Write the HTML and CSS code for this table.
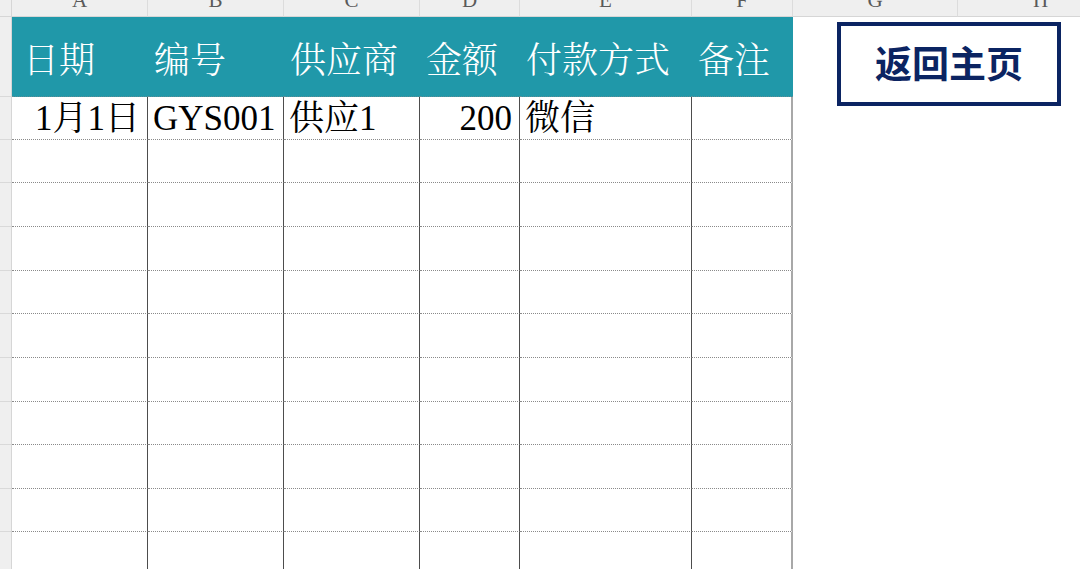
FILE: index.html
```html
<!DOCTYPE html>
<html lang="zh-CN">
<head>
<meta charset="utf-8">
<title>付款记录</title>
<link rel="stylesheet" href="styles.css">
</head>
<body>
<div class="sheet">
  <div class="row colhead">
    <div class="corner"></div>
    <div class="ch"><span>A</span></div>
    <div class="ch"><span>B</span></div>
    <div class="ch"><span>C</span></div>
    <div class="ch"><span>D</span></div>
    <div class="ch"><span>E</span></div>
    <div class="ch"><span>F</span></div>
    <div class="ch"><span>G</span></div>
    <div class="ch"><span>H</span></div>
  </div>

  <div class="row head">
    <div class="rh"></div>
    <div class="hc first">日期</div>
    <div class="hc">编号</div>
    <div class="hc">供应商</div>
    <div class="hc">金额</div>
    <div class="hc">付款方式</div>
    <div class="hc">备注</div>
    <div class="blank"></div>
    <div class="blank"></div>
  </div>

  <div class="row r43">
    <div class="rh"></div>
    <div class="c right">1月1日</div>
    <div class="c">GYS001</div>
    <div class="c">供应1</div>
    <div class="c right">200</div>
    <div class="c">微信</div>
    <div class="c last"></div>
    <div class="blank"></div>
    <div class="blank"></div>
  </div>

  <div class="row r43"><div class="rh"></div><div class="c"></div><div class="c"></div><div class="c"></div><div class="c"></div><div class="c"></div><div class="c last"></div><div class="blank"></div><div class="blank"></div></div>
  <div class="row r44"><div class="rh"></div><div class="c"></div><div class="c"></div><div class="c"></div><div class="c"></div><div class="c"></div><div class="c last"></div><div class="blank"></div><div class="blank"></div></div>
  <div class="row r44"><div class="rh"></div><div class="c"></div><div class="c"></div><div class="c"></div><div class="c"></div><div class="c"></div><div class="c last"></div><div class="blank"></div><div class="blank"></div></div>
  <div class="row r43"><div class="rh"></div><div class="c"></div><div class="c"></div><div class="c"></div><div class="c"></div><div class="c"></div><div class="c last"></div><div class="blank"></div><div class="blank"></div></div>
  <div class="row r44"><div class="rh"></div><div class="c"></div><div class="c"></div><div class="c"></div><div class="c"></div><div class="c"></div><div class="c last"></div><div class="blank"></div><div class="blank"></div></div>
  <div class="row r44"><div class="rh"></div><div class="c"></div><div class="c"></div><div class="c"></div><div class="c"></div><div class="c"></div><div class="c last"></div><div class="blank"></div><div class="blank"></div></div>
  <div class="row r43"><div class="rh"></div><div class="c"></div><div class="c"></div><div class="c"></div><div class="c"></div><div class="c"></div><div class="c last"></div><div class="blank"></div><div class="blank"></div></div>
  <div class="row r44"><div class="rh"></div><div class="c"></div><div class="c"></div><div class="c"></div><div class="c"></div><div class="c"></div><div class="c last"></div><div class="blank"></div><div class="blank"></div></div>
  <div class="row r43"><div class="rh"></div><div class="c"></div><div class="c"></div><div class="c"></div><div class="c"></div><div class="c"></div><div class="c last"></div><div class="blank"></div><div class="blank"></div></div>
  <div class="row r44"><div class="rh"></div><div class="c"></div><div class="c"></div><div class="c"></div><div class="c"></div><div class="c"></div><div class="c last"></div><div class="blank"></div><div class="blank"></div></div>

  <a class="home-btn" href="#">返回主页</a>
</div>
</body>
</html>
```
FILE: styles.css
```css
* { box-sizing: border-box; }

html, body {
  margin: 0;
  padding: 0;
  background: #ffffff;
  overflow: hidden;
}

body {
  width: 1080px;
  height: 569px;
  font-family: "Liberation Serif", "Noto Serif CJK SC", "Noto Sans CJK SC", serif;
}

.sheet {
  position: relative;
  width: 1124px;
}

.row {
  display: grid;
  grid-template-columns: 12px 136px 136px 136px 100px 172px 101px 165px 166px;
  grid-template-rows: 100%;
  overflow: hidden;
}

/* column letters */
.colhead { height: 17px; }
.corner {
  background: #efefef;
  border-right: 1px solid #d6d6d6;
  border-bottom: 1px solid #d6d6d6;
}
.ch {
  background: #efefef;
  border-right: 1px solid #dcdcdc;
  border-bottom: 1px solid #d6d6d6;
  display: flex;
  justify-content: center;
  align-items: flex-end;
  overflow: hidden;
}
.ch span {
  font-family: "Liberation Serif", serif;
  font-size: 21px;
  line-height: 1;
  color: #5a5a5a;
  margin-bottom: 5px;
}

/* row header strip */
.rh {
  background: #efefef;
  border-right: 1px solid #d6d6d6;
  border-bottom: 1px solid #d9d9d9;
}

/* header row */
.head { height: 80px; }
.hc {
  background: #2098a9;
  color: #ffffff;
  font-family: "Noto Serif CJK SC", "Noto Sans CJK SC", sans-serif;
  font-weight: 300;
  font-size: 36px;
  line-height: 1;
  display: flex;
  align-items: center;
  padding: 2px 0 0 6px;
  white-space: nowrap;
  border-bottom: 1px dotted #5d8e96;
}
.hc.first { padding-left: 11px; }

.r43 { height: 43px; }
.r44 { height: 44px; }

.c {
  border-right: 1px solid #4d4d4d;
  border-bottom: 1px dotted #8a8a8a;
  font-size: 35px;
  line-height: 1;
  color: #000000;
  display: flex;
  align-items: center;
  padding: 0 5px;
  white-space: nowrap;
  overflow: hidden;
}
.c.right { justify-content: flex-end; padding-right: 7px; }
.c.last { border-right: 2px solid #a8a8a8; }

.blank { background: #ffffff; }

/* floating button shape */
.home-btn {
  position: absolute;
  left: 837px;
  top: 22px;
  width: 224px;
  height: 84px;
  border: 4px solid #0b2462;
  background: #ffffff;
  color: #0b2462;
  font-family: "Noto Sans CJK SC", sans-serif;
  font-weight: 700;
  font-size: 37px;
  line-height: 1;
  display: flex;
  align-items: center;
  justify-content: center;
  padding-bottom: 4px;
  text-decoration: none;
}
```
